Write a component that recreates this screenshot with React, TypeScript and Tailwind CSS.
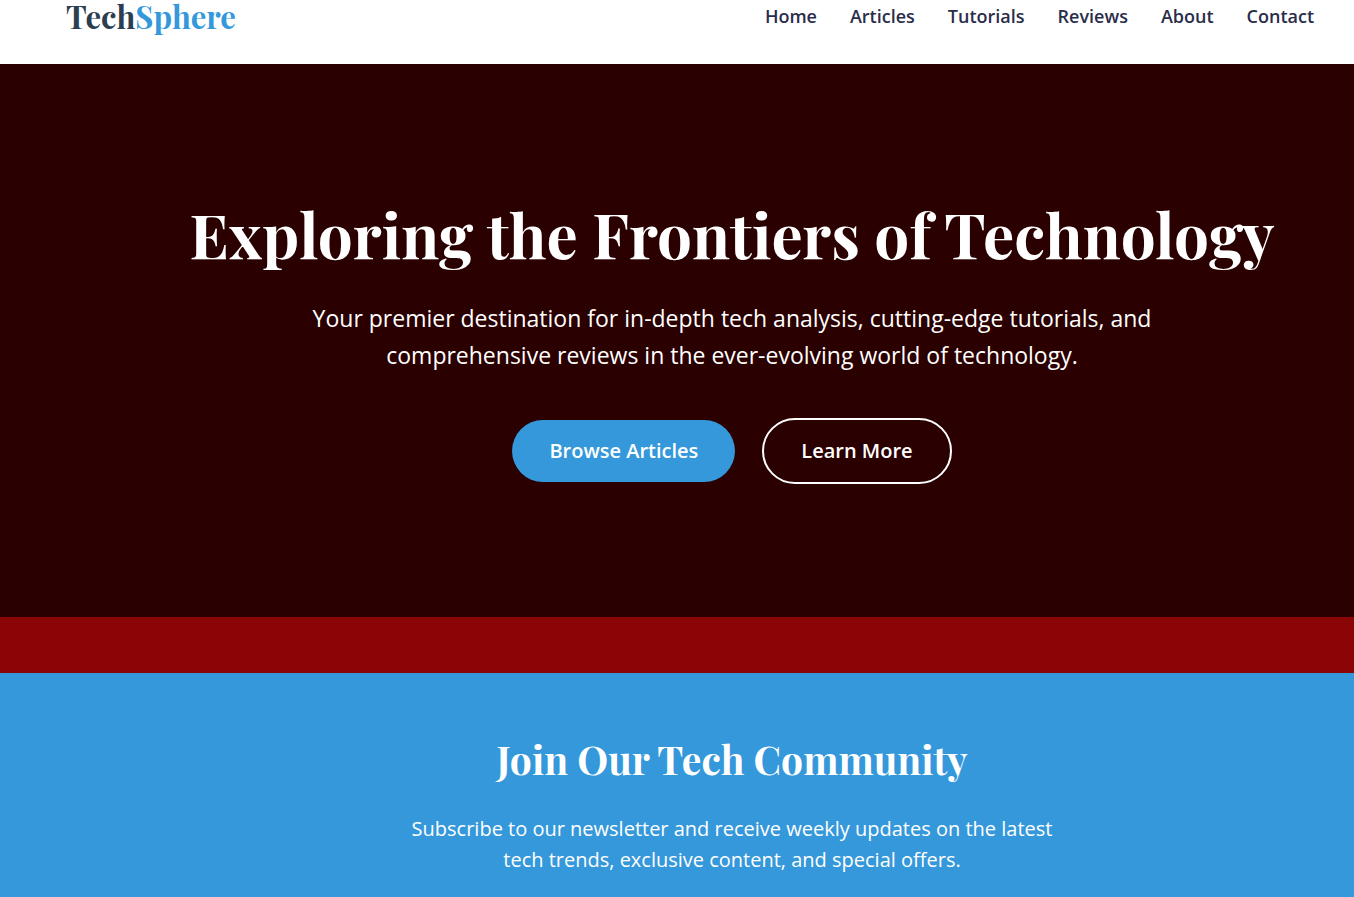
const links = ["Home", "Articles", "Tutorials", "Reviews", "About", "Contact"];

const serif = "font-['Playfair_Display','Liberation_Serif',serif]";

export default function App() {
  return (
    <div className="min-h-screen bg-[#3498db] font-['Open_Sans',sans-serif]">
      <header className="flex h-16 items-start justify-between bg-white pr-10 pl-[66px]">
        <a href="#home" className={`${serif} text-[31px] leading-8 font-bold text-[#2c3e50]`}>
          Tech<span className="text-[#3498db]">Sphere</span>
        </a>
        <nav aria-label="Main" className="flex gap-[33px] pt-1">
          {links.map((label) => (
            <a
              key={label}
              href={`#${label.toLowerCase()}`}
              className="text-[18px] leading-6 font-semibold text-[#2a2d4a]"
            >
              {label}
            </a>
          ))}
        </nav>
      </header>

      <main>
        <section className="flex flex-col items-center bg-[#2a0000] pt-[132px] pb-[133px] pl-[110px] text-center text-white">
          <h1 className={`${serif} text-[62px] leading-[76px] font-bold whitespace-nowrap`}>
            Exploring the Frontiers of Technology
          </h1>
          <p className="mt-7 max-w-[900px] text-[23px] leading-[37px]">
            Your premier destination for in-depth tech analysis, cutting-edge tutorials, and
            comprehensive reviews in the ever-evolving world of technology.
          </p>
          <div className="mt-11 flex items-center gap-[27px]">
            <a
              href="#articles"
              className="rounded-full bg-[#3498db] px-[37px] py-4 text-[20px] leading-[30px] font-semibold"
            >
              Browse Articles
            </a>
            <a
              href="#about"
              className="rounded-full border-2 border-white px-[37px] py-4 text-[20px] leading-[30px] font-semibold"
            >
              Learn More
            </a>
          </div>
        </section>

        <div className="h-14 bg-[#8b0406]" />

        <section className="flex flex-col items-center bg-[#3498db] pt-[60px] pl-[110px] text-center text-white">
          <h2 className={`${serif} text-[39px] leading-[52px] font-bold`}>Join Our Tech Community</h2>
          <p className="mt-7 max-w-[670px] text-[20px] leading-[31px]">
            Subscribe to our newsletter and receive weekly updates on the latest tech trends,
            exclusive content, and special offers.
          </p>
        </section>
      </main>
    </div>
  );
}
